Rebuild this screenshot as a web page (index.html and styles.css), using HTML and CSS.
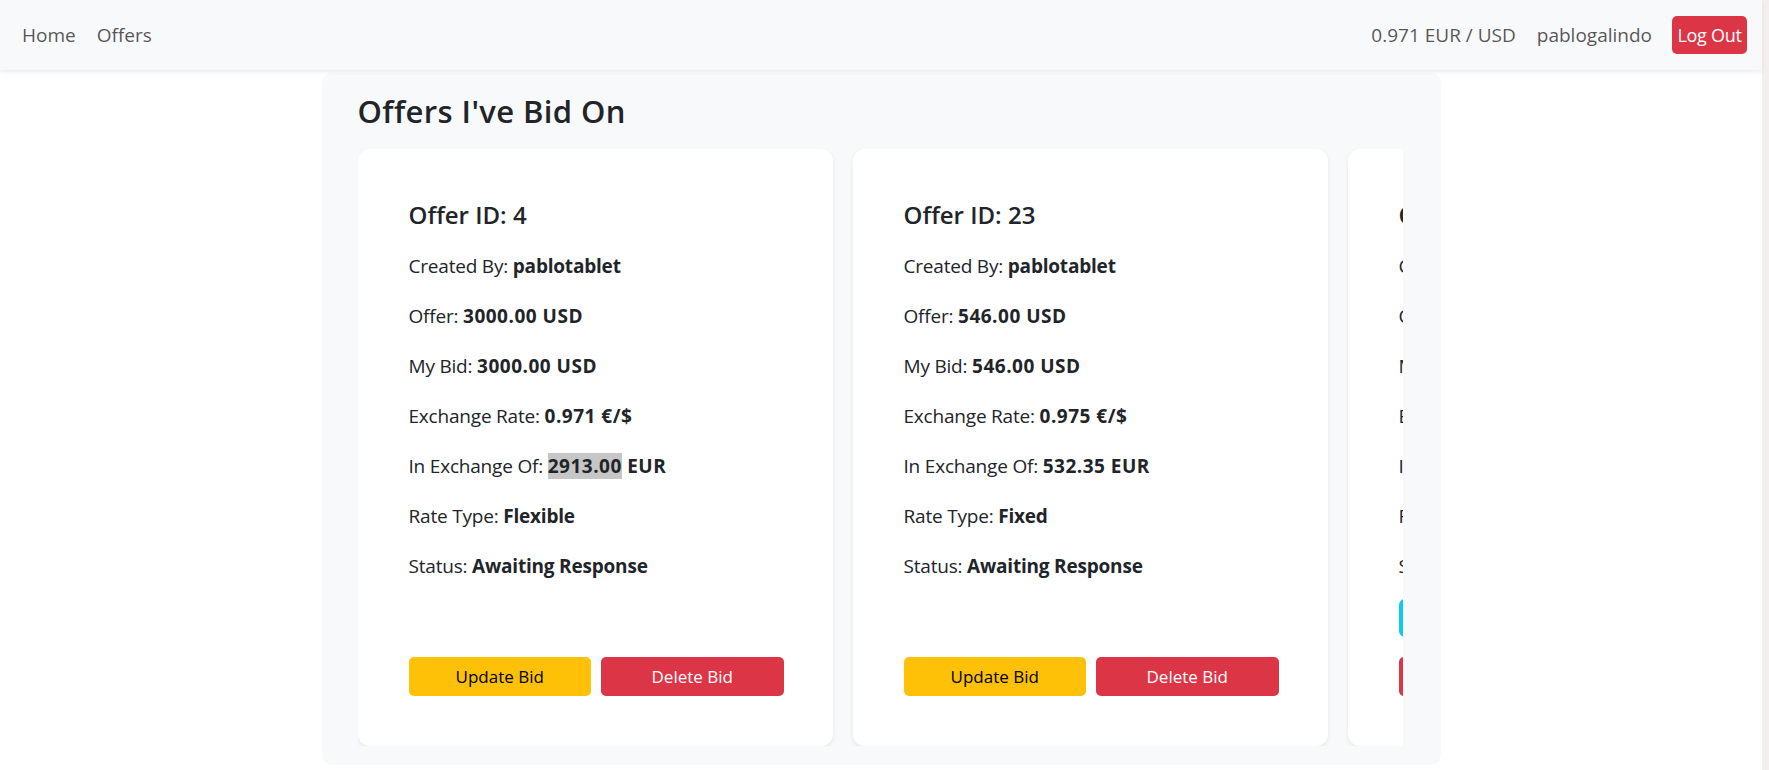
FILE: index.html
```html
<!DOCTYPE html>
<html lang="en">
<head>
<meta charset="utf-8">
<title>Offers I've Bid On</title>
<link rel="stylesheet" href="styles.css">
</head>
<body>
<div class="page">
  <nav class="navbar">
    <div class="nav-left">
      <a class="nav-link" href="#">Home</a>
      <a class="nav-link" href="#">Offers</a>
    </div>
    <div class="nav-right">
      <span class="nav-text">0.971 EUR / USD</span>
      <span class="nav-text">pablogalindo</span>
      <button class="btn btn-logout">Log Out</button>
    </div>
  </nav>
  <main class="container">
    <h4 class="section-title">Offers I've Bid On</h4>
    <div class="card-row">
      <div class="card">
        <h5 class="card-title">Offer ID: 4</h5>
        <p>Created By: <b>pablotablet</b></p>
        <p>Offer: <b class="num">3000.00 USD</b></p>
        <p>My Bid: <b class="num">3000.00 USD</b></p>
        <p>Exchange Rate: <b class="num">0.971 €/$</b></p>
        <p>In Exchange Of: <b class="num"><span class="hl">2913.00</span> EUR</b></p>
        <p>Rate Type: <b>Flexible</b></p>
        <p>Status: <b>Awaiting Response</b></p>
        <div class="actions">
          <button class="btn btn-warning">Update Bid</button>
          <button class="btn btn-danger">Delete Bid</button>
        </div>
      </div>
      <div class="card">
        <h5 class="card-title">Offer ID: 23</h5>
        <p>Created By: <b>pablotablet</b></p>
        <p>Offer: <b class="num">546.00 USD</b></p>
        <p>My Bid: <b class="num">546.00 USD</b></p>
        <p>Exchange Rate: <b class="num">0.975 €/$</b></p>
        <p>In Exchange Of: <b class="num">532.35 EUR</b></p>
        <p>Rate Type: <b>Fixed</b></p>
        <p>Status: <b>Awaiting Response</b></p>
        <div class="actions">
          <button class="btn btn-warning">Update Bid</button>
          <button class="btn btn-danger">Delete Bid</button>
        </div>
      </div>
      <div class="card">
        <h5 class="card-title">Offer ID: 31</h5>
        <p>Created By: <b>pablotablet</b></p>
        <p>Offer: <b class="num">1200.00 USD</b></p>
        <p>My Bid: <b class="num">1150.00 USD</b></p>
        <p>Exchange Rate: <b class="num">0.971 €/$</b></p>
        <p>In Exchange Of: <b class="num">1116.65 EUR</b></p>
        <p>Rate Type: <b>Flexible</b></p>
        <p>Status: <b>Countered</b></p>
        <div class="actions-stack">
          <button class="btn btn-info">Accept</button>
          <button class="btn btn-danger">Delete Bid</button>
        </div>
      </div>
    </div>
  </main>
</div>
<div class="scroll-strip"></div>
</body>
</html>
```

FILE: styles.css
```css
* { box-sizing: border-box; }

html, body {
  margin: 0;
  height: 770px;
}

body {
  display: flex;
  background: #ffffff;
  font-family: "Open Sans", "Noto Sans", sans-serif;
  font-size: 19px;
  letter-spacing: -0.2px;
  line-height: 30px;
  color: #212529;
  overflow: hidden;
}

.page {
  flex: 1;
  min-width: 0;
}

.scroll-strip {
  width: 7px;
  background: #f4eeee;
}

.navbar {
  height: 70px;
  background: #f8f9fa;
  box-shadow: 0 2px 4px rgba(0, 0, 0, 0.08);
  display: flex;
  align-items: center;
  justify-content: space-between;
  padding: 0 15px 0 22px;
  position: relative;
  z-index: 1;
  letter-spacing: 0;
}

.nav-left, .nav-right {
  display: flex;
  align-items: center;
  gap: 21px;
}

.nav-link, .nav-text {
  color: rgba(0, 0, 0, 0.68);
  text-decoration: none;
  font-size: 19px;
}

.btn {
  font-family: inherit;
  border: 1px solid transparent;
  border-radius: 5px;
  cursor: pointer;
  line-height: 1.5;
  padding: 0;
}

.btn-logout {
  background: #dc3545;
  color: #fff;
  font-size: 18px;
  letter-spacing: -0.3px;
  height: 38px;
  width: 75px;
  margin-left: -1px;
}

.container {
  width: 1119px;
  margin: 3px auto 0;
  background: #f8f9fa;
  border-radius: 10px;
  padding: 20px 38px 19px 36px;
}

.section-title {
  margin: 0 0 19px;
  font-size: 31px;
  font-weight: 600;
  letter-spacing: 0.4px;
  line-height: 1.2;
}

.card-row {
  display: flex;
  gap: 20px;
  overflow: hidden;
}

.card {
  flex: 0 0 475px;
  min-width: 0;
  background: #fff;
  border-radius: 12px;
  box-shadow: 0 2px 5px rgba(0, 0, 0, 0.08);
  padding: 52px 49px 50px 51px;
  display: flex;
  flex-direction: column;
}

.card-title {
  margin: 0 0 19px;
  font-size: 24px;
  font-weight: 600;
  letter-spacing: 0;
  line-height: 1.2;
}

.card p {
  margin: 0 0 18px;
  padding-top: 2px;
  white-space: nowrap;
}

.card b {
  font-weight: 700;
}

.card b.num {
  letter-spacing: 0.5px;
}

.hl {
  background: #c6c6c6;
}

.actions {
  margin-top: auto;
  display: flex;
  gap: 10px;
}

.actions .btn {
  flex: 1 1 0;
  min-width: 0;
  height: 39px;
  font-size: 17px;
}

.actions-stack {
  margin-top: auto;
  display: flex;
  flex-direction: column;
  gap: 20px;
}

.actions-stack .btn {
  height: 38px;
  font-size: 17px;
}

.actions-stack .btn-danger {
  height: 39px;
}

.btn-warning {
  background: #ffc107;
  color: #000;
}

.btn-danger {
  background: #dc3545;
  color: #fff;
}

.btn-info {
  background: #0dcaf0;
  color: #000;
  border-radius: 6px;
}
```
